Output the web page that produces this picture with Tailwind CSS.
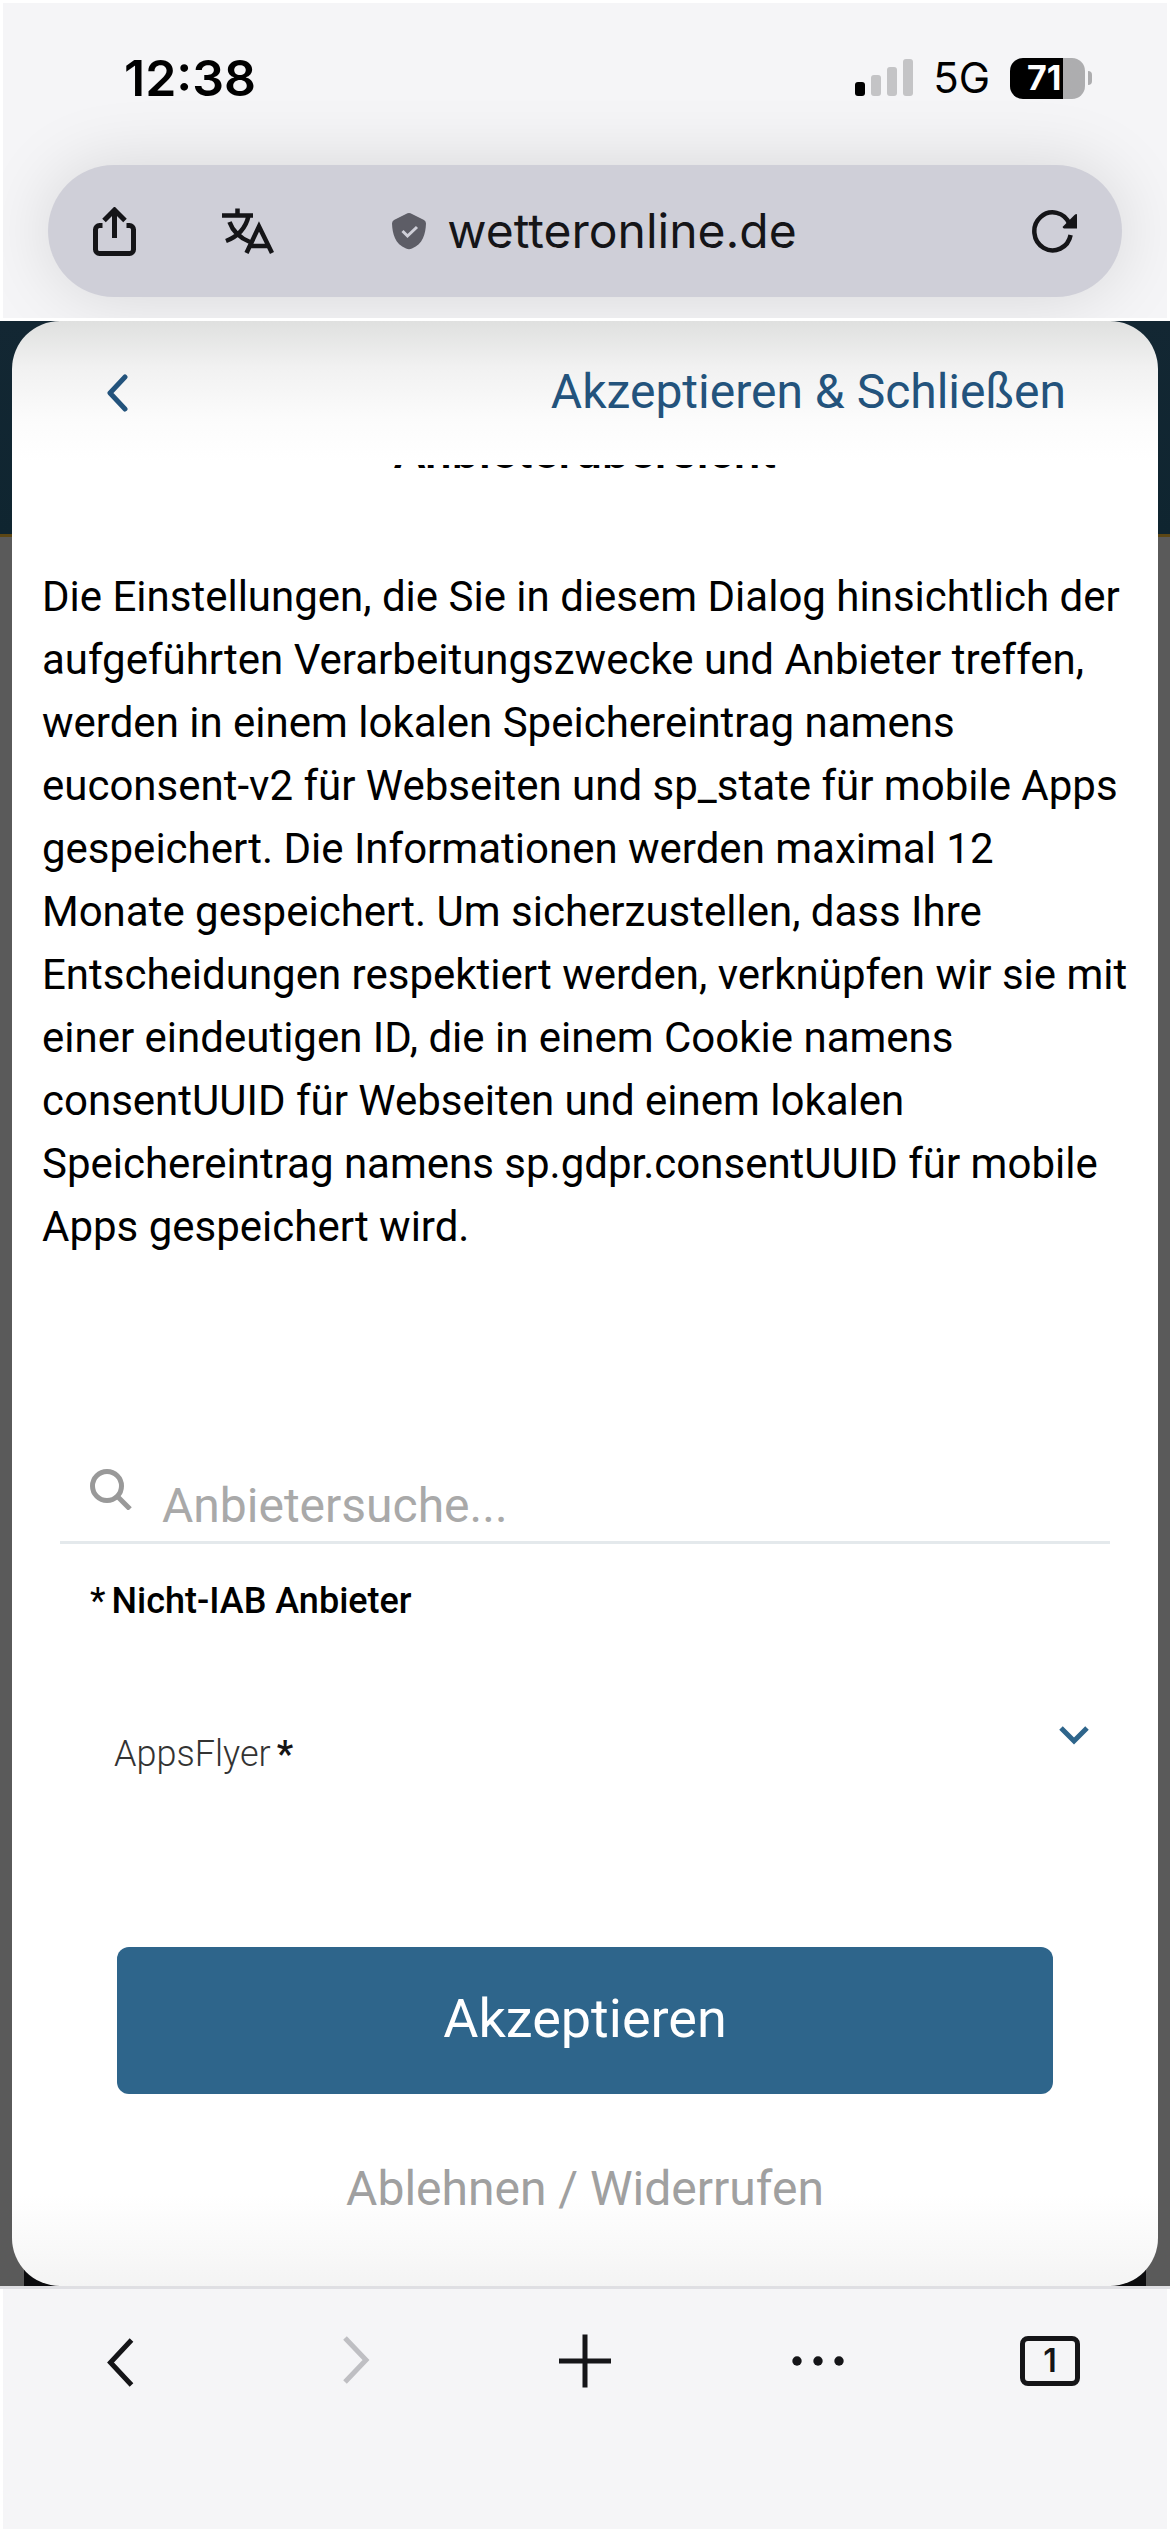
<!DOCTYPE html>
<html lang="de">
<head>
    <meta charset="utf-8">
    <meta name="viewport" content="width=device-width, initial-scale=1">
    <title>wetteronline.de</title>
    <script src="https://cdn.jsdelivr.net/npm/@tailwindcss/browser@4"></script>
</head>
<body class="min-h-screen flex flex-col bg-white font-['Inter',sans-serif] text-[#151518]">

    <!-- Status bar + address bar -->
    <header class="overflow-hidden border-[3px] border-white bg-[#f5f5f7] px-[45px] pb-[21px]">
        <div class="flex items-center justify-between h-[150px] pl-[76px] pr-[30px] text-black">
            <span class="text-[50px] leading-[60px] font-semibold">12:38</span>
            <div class="flex items-center gap-[20px]">
                <svg class="w-[58px] h-[38px]" viewBox="0 0 58 38" aria-hidden="true">
                    <rect x="0" y="23" width="10" height="14" rx="3"/>
                    <g fill="#c4c4c6">
                        <rect x="16" y="16" width="10" height="21" rx="3"/>
                        <rect x="32" y="8" width="10" height="29" rx="3"/>
                        <rect x="48" y="0" width="10" height="37" rx="3"/>
                    </g>
                </svg>
                <span class="text-[42px] leading-[48px]">5G</span>
                <div class="flex items-center gap-[3px]">
                    <div class="flex items-center w-[75px] h-[41px] rounded-[13px] bg-linear-to-r from-black from-71% to-[#adadaf] to-71% pl-[17px]">
                        <span class="text-[34px] leading-[40px] font-bold text-white">71</span>
                    </div>
                    <div class="w-[4px] h-[14px] rounded-r-full bg-[#adadaf]"></div>
                </div>
            </div>
        </div>

        <div class="mt-[12px] flex items-center justify-between h-[132px] rounded-full bg-[#cfcfd8] px-[45px] shadow-[0_0_70px_rgba(0,0,0,0.13)]">
            <div class="flex items-center gap-[86px]">
                <button type="button" aria-label="Teilen">
                    <svg class="block w-[43px] h-[49px]" viewBox="0 0 43 49" fill="none" stroke="currentColor" stroke-width="5" aria-hidden="true">
                        <path d="M9.500 18.500H6.500a4 4 0 0 0-4 4V42.500a4 4 0 0 0 4 4H36.500a4 4 0 0 0 4-4V22.500a4 4 0 0 0-4-4H33.500M21.500 31V4M11 13.500L21.500 3L32 13.500"/>
                    </svg>
                </button>
                <button type="button" aria-label="Übersetzen">
                    <svg class="block w-[52px] h-[48px]" viewBox="0 0 52 48" fill="none" stroke="currentColor" stroke-width="4.500" aria-hidden="true">
                        <path d="M0 8.500H31M15.500 1.500V8.500M26.500 9C24 20 17 29 4 34M7.500 15C11 25 18 31 28 35M24.500 46L37 19.500L50 46M29 39H46"/>
                    </svg>
                </button>
            </div>
            <div class="flex items-center gap-[21px]">
                <svg class="w-[34px] h-[38px]" viewBox="0 0 34 38" fill="none" aria-hidden="true">
                    <path fill="#5d5d66" d="M15.500 1.300Q17 .7 18.500 1.300L32 8Q34 9.200 34 11.500C33.500 22 31 32 20 36.500Q17 37.800 14 36.500C3 32 .5 22 0 11.500Q0 9.200 2 8Z"/>
                    <path stroke="#cfcfd8" stroke-width="3" d="M10.500 19L15.500 24L25 15"/>
                </svg>
                <span class="text-[48px] leading-[60px]">wetteronline.de</span>
            </div>
            <div class="flex justify-end w-[162px]">
                <button type="button" aria-label="Neu laden">
                    <svg class="block w-[45px] h-[44px]" viewBox="0 0 45 44" aria-hidden="true">
                        <path fill="none" stroke="currentColor" stroke-width="4.500" d="M38.600 26A18.300 19 0 1 1 37.500 15"/>
                        <path fill="currentColor" d="M45 5.500V19.500H32Q30 19 31 17.500L42.500 6Q44.500 4.500 45 5.500Z"/>
                    </svg>
                </button>
            </div>
        </div>
    </header>

    <!-- Dimmed page with the consent dialog on top -->
    <main class="flex-1 flex flex-col bg-[#5a5a5a] bg-[linear-gradient(#132733,#0f2530_213px,#5c4715_213px,#5c4715_216px,transparent_216px)] px-[12px] font-['Roboto',sans-serif]">
        <div class="flex-1 flex flex-col bg-[linear-gradient(#0c0c0e,#0c0c0e)] bg-[length:calc(100%_-_24px)_16px] bg-bottom bg-no-repeat">
            <div role="dialog" aria-label="Datenschutz" class="flex-1 flex flex-col rounded-[48px] bg-white bg-[linear-gradient(#dfe0df,#f1f1f1_46px,#fbfbfb_96px,#fff_140px,#fff_calc(100%_-_90px),#f4f4f4)]">
                <div class="flex items-center justify-between h-[144px] pl-[93px] pr-[92px] text-[#23537c]">
                    <button type="button" aria-label="Zurück">
                        <svg class="block w-[24px] h-[38px]" viewBox="0 0 24 38" fill="none" stroke="currentColor" stroke-width="5" stroke-linecap="round" stroke-linejoin="round" aria-hidden="true">
                            <path d="M20 3L5 19L20 35"/>
                        </svg>
                    </button>
                    <button type="button" class="pb-[2px] text-[48px] leading-[60px]">Akzeptieren &amp; Schließen</button>
                </div>

                <div class="flex-1 overflow-hidden px-[30px] text-black">
                    <h1 class="-mt-[43px] text-center text-[48px] leading-[60px] font-medium">Anbieterübersicht</h1>
                    <p class="mt-[83px] text-[42px] leading-[63px]">Die Einstellungen, die Sie in diesem Dialog hinsichtlich der aufgeführten Verarbeitungszwecke und Anbieter treffen, werden in einem lokalen Speichereintrag namens euconsent-v2 für Webseiten und sp_state für mobile Apps gespeichert. Die Informationen werden maximal 12 Monate gespeichert. Um sicherzustellen, dass Ihre Entscheidungen respektiert werden, verknüpfen wir sie mit einer eindeutigen ID, die in einem Cookie namens consentUUID für Webseiten und einem lokalen Speichereintrag namens sp.gdpr.consentUUID für mobile Apps gespeichert wird.</p>

                    <div class="mx-[18px] mt-[200px] flex items-start gap-[30px] border-b-[3px] border-[#e4e9ec] pl-[30px] pt-[10px] pb-[5px]">
                        <label for="vendorSearch" aria-label="Anbietersuche" class="text-[#999]">
                            <svg class="block w-[42px] h-[42px]" viewBox="0 0 42 42" fill="none" stroke="currentColor" stroke-width="5" aria-hidden="true">
                                <circle cx="17" cy="18" r="14.500"/>
                                <path d="M27.500 28.500L40 41"/>
                            </svg>
                        </label>
                        <input type="text" id="vendorSearch" placeholder="Anbietersuche..." class="mt-2 h-[60px] min-w-0 flex-1 text-[48px] leading-[60px] outline-none placeholder:text-[#a9a9a9]">
                    </div>

                    <div class="mt-[33px] flex gap-[6px] pl-[48px] text-[36px] leading-[48px] font-medium">
                        <span class="font-normal">*</span>
                        <h2>Nicht-IAB Anbieter</h2>
                    </div>

                    <button type="button" aria-expanded="false" class="mt-[101px] flex w-full items-start justify-between pl-[72px] pr-[39px] text-[36px] leading-[48px]">
                        <span class="mt-1 flex gap-[6px] font-light text-[#333]">AppsFlyer <b class="font-bold text-[#151515]">*</b></span>
                        <svg class="w-[30px] h-[20px] text-[#2e658b]" viewBox="0 0 30 20" fill="none" stroke="currentColor" stroke-width="5" aria-hidden="true">
                            <path d="M2 2L15 15L28 2"/>
                        </svg>
                    </button>
                </div>

                <div class="flex flex-col gap-[65px] px-[105px] pb-[67px]">
                    <button type="button" class="h-[147px] rounded-[12px] bg-[#2e658b] pb-[4px] text-[54px] leading-[66px] text-white">Akzeptieren</button>
                    <button type="button" class="text-[48px] leading-[60px] text-[#a0a0a0]">Ablehnen / Widerrufen</button>
                </div>
            </div>
        </div>
    </main>

    <!-- Browser toolbar -->
    <div class="h-[3px] bg-[#dfdfe3]"></div>
    <nav class="flex items-center justify-between border-x-[3px] border-b-[3px] border-white bg-[#f5f5f7] px-[87px] pt-[42px] pb-[138px]">
        <button type="button" aria-label="Zurück">
            <svg class="block w-[60px] h-[60px]" viewBox="0 0 60 60" fill="none" stroke="currentColor" stroke-width="5" aria-hidden="true">
                <path d="M41.500 9L20.500 31.500L41.500 54"/>
            </svg>
        </button>
        <button type="button" aria-label="Vorwärts" disabled class="text-[#bfbfc3]">
            <svg class="block w-[60px] h-[60px]" viewBox="0 0 60 60" fill="none" stroke="currentColor" stroke-width="5" aria-hidden="true">
                <path d="M22 7L43 29L22 51"/>
            </svg>
        </button>
        <button type="button" aria-label="Neuer Tab">
            <svg class="block w-[60px] h-[60px]" viewBox="0 0 60 60" fill="none" stroke="currentColor" stroke-width="5" aria-hidden="true">
                <path d="M4 30H56M30 3.500V56.500"/>
            </svg>
        </button>
        <button type="button" aria-label="Mehr">
            <svg class="block w-[60px] h-[60px]" viewBox="0 0 60 60" fill="currentColor" aria-hidden="true">
                <circle cx="9" cy="30" r="4.700"/>
                <circle cx="30" cy="30" r="4.700"/>
                <circle cx="51" cy="30" r="4.700"/>
            </svg>
        </button>
        <button type="button" aria-label="Tabs" class="flex h-[50px] w-[60px] items-center justify-center rounded-[8px] border-[5px] border-current text-[32px] leading-[40px] font-semibold">1</button>
    </nav>
</body>
</html>
